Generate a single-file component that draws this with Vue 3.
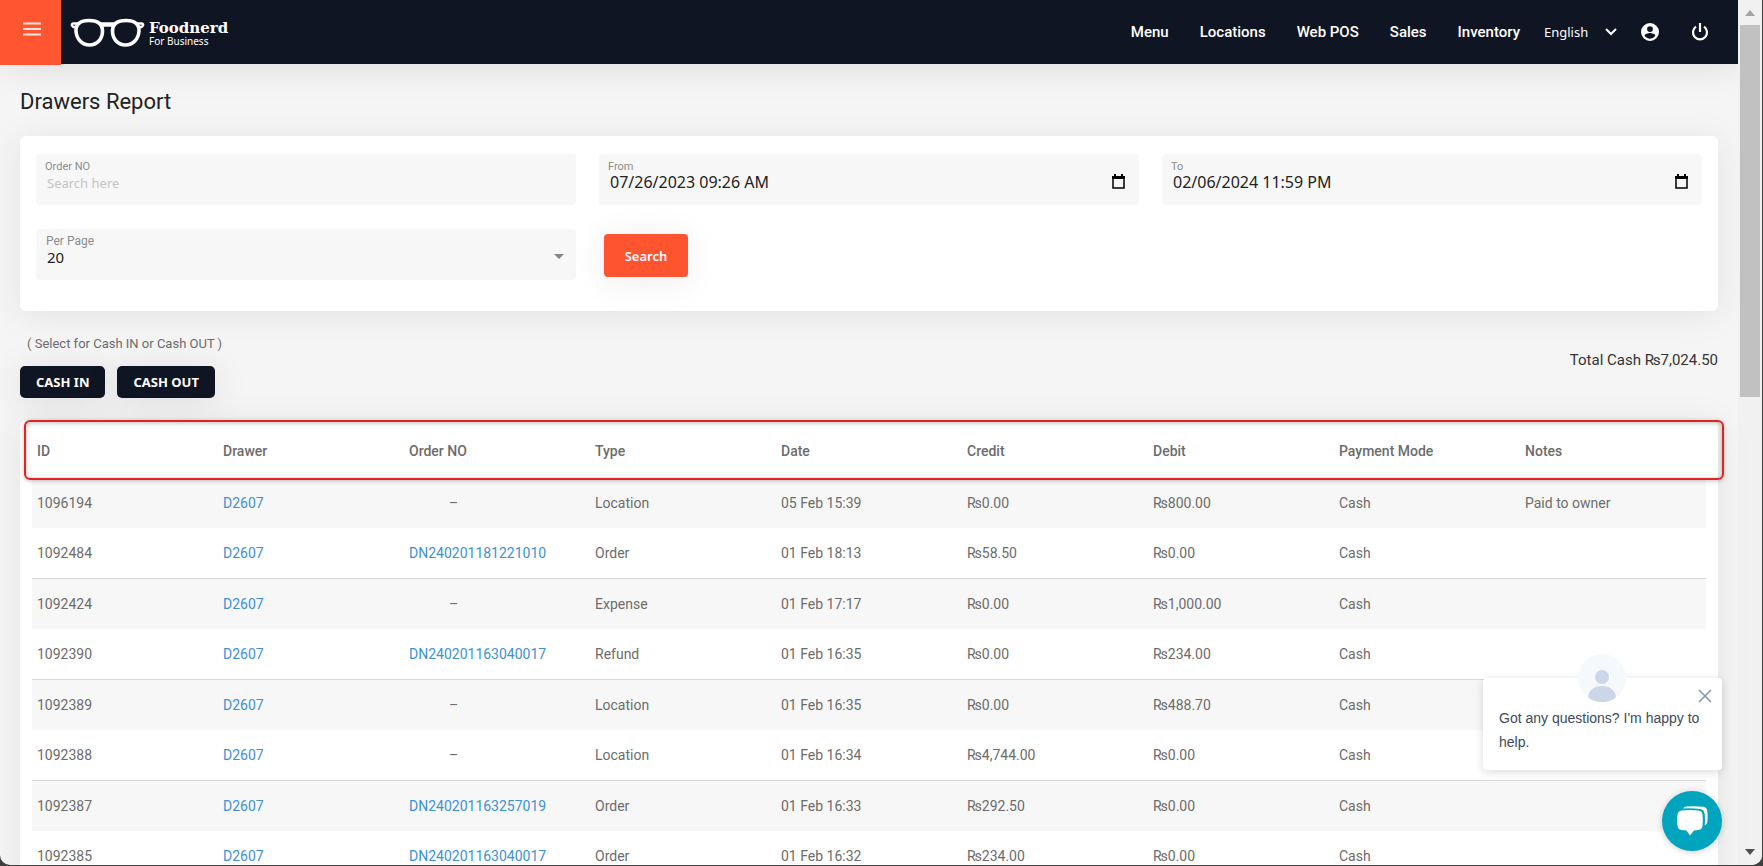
<script setup>
import { ref } from 'vue'

const links = ['Menu', 'Locations', 'Web POS', 'Sales', 'Inventory']
const columns = ['ID', 'Drawer', 'Order NO', 'Type', 'Date', 'Credit', 'Debit', 'Payment Mode', 'Notes']
const rows = [
  { id: '1096194', order: '', type: 'Location', date: '05 Feb 15:39', credit: '₨0.00', debit: '₨800.00', notes: 'Paid to owner' },
  { id: '1092484', order: 'DN240201181221010', type: 'Order', date: '01 Feb 18:13', credit: '₨58.50', debit: '₨0.00', notes: '' },
  { id: '1092424', order: '', type: 'Expense', date: '01 Feb 17:17', credit: '₨0.00', debit: '₨1,000.00', notes: '' },
  { id: '1092390', order: 'DN240201163040017', type: 'Refund', date: '01 Feb 16:35', credit: '₨0.00', debit: '₨234.00', notes: '' },
  { id: '1092389', order: '', type: 'Location', date: '01 Feb 16:35', credit: '₨0.00', debit: '₨488.70', notes: '' },
  { id: '1092388', order: '', type: 'Location', date: '01 Feb 16:34', credit: '₨4,744.00', debit: '₨0.00', notes: '' },
  { id: '1092387', order: 'DN240201163257019', type: 'Order', date: '01 Feb 16:33', credit: '₨292.50', debit: '₨0.00', notes: '' },
  { id: '1092385', order: 'DN240201163040017', type: 'Order', date: '01 Feb 16:32', credit: '₨234.00', debit: '₨0.00', notes: '' },
]
const orderNo = ref('')
const from = ref('07/26/2023 09:26 AM')
const to = ref('02/06/2024 11:59 PM')
const perPage = ref('20')
const language = ref('English')
const chatOpen = ref(true)
</script>

<template>
  <div class="window">
    <div class="page">
      <header class="topbar">
        <button class="menu-toggle" type="button" aria-label="Toggle menu">
          <svg width="18" height="14" viewBox="0 0 18 14"><path d="M0 1.500h18M0 7h18M0 12.500h18" stroke="#fde4dc" stroke-width="2.200" /></svg>
        </button>
        <a class="brand" href="#">
          <svg class="glasses" width="76" height="30" viewBox="0 0 76 30" fill="none" stroke="#fff">
            <path d="M19 2.500c9 0 13.500 4 13.500 10.500 0 8-5.500 14-13 14S6.500 21 6 13C5.600 6.500 10 2.500 19 2.500z" stroke-width="3.600" />
            <path d="M56 2.500c-9 0-13.500 4-13.500 10.500 0 8 5.500 14 13 14s13-6 13.500-14c.4-6.500-4-10.500-13-10.500z" stroke-width="3.600" />
            <path d="M31 6.500h13" stroke-width="4.500" />
            <path d="M8 5.500H3.500C2 5.500 1.500 6.500 2 7.500l1.500 1.500H6M67 5.500h4.500c1.500 0 2 1 1.500 2L71.500 9H69" stroke-width="2.400" />
          </svg>
          <span class="brand-text">
            <span class="brand-name">Foodnerd</span>
            <span class="brand-sub">For Business</span>
          </span>
        </a>
        <nav class="nav">
          <a v-for="l in links" :key="l" href="#">{{ l }}</a>
        </nav>
        <div class="language">
          <select v-model="language" aria-label="Language"><option>English</option></select>
          <svg width="12" height="8" viewBox="0 0 12 8" fill="none" stroke="#fff" stroke-width="2"><path d="M1 1l5 5 5-5" /></svg>
        </div>
        <button class="icon-btn" type="button" aria-label="Account">
          <svg width="18" height="18" viewBox="2 2 20 20" fill="#fff"><path d="M12 2a10 10 0 1 0 0 20 10 10 0 0 0 0-20zm0 3.500a3.200 3.200 0 1 1 0 6.400 3.200 3.200 0 0 1 0-6.400zm0 14c-2.500 0-4.700-1.300-6-3.200 0-2 4-3.100 6-3.100s6 1.100 6 3.100a7.200 7.200 0 0 1-6 3.200z" /></svg>
        </button>
        <button class="icon-btn" type="button" aria-label="Log out">
          <svg width="18" height="18" viewBox="0 0 18 18" fill="none" stroke="#fff" stroke-width="2.200"><path d="M9 0v9M5 3.600A7 7 0 1 0 13 3.600" /></svg>
        </button>
      </header>

      <main class="content">
        <h1>Drawers Report</h1>

        <form class="filters" @submit.prevent>
          <div class="field">
            <label for="order">Order NO</label>
            <input id="order" v-model="orderNo" type="text" class="small" placeholder="Search here" />
          </div>
          <div class="field">
            <label for="from">From</label>
            <input id="from" v-model="from" type="text" />
            <button class="calendar" type="button" aria-label="Pick start date">
              <svg width="13" height="15" viewBox="0 0 13 15"><path d="M1 3h11v11H1z" fill="none" stroke="#000" stroke-width="1.500" /><path d="M0 2h13v3H0zM2 0h2v3H2zM9 0h2v3H9z" /></svg>
            </button>
          </div>
          <div class="field">
            <label for="to">To</label>
            <input id="to" v-model="to" type="text" />
            <button class="calendar" type="button" aria-label="Pick end date">
              <svg width="13" height="15" viewBox="0 0 13 15"><path d="M1 3h11v11H1z" fill="none" stroke="#000" stroke-width="1.500" /><path d="M0 2h13v3H0zM2 0h2v3H2zM9 0h2v3H9z" /></svg>
            </button>
          </div>
          <div class="field select-field">
            <label for="per">Per Page</label>
            <select id="per" v-model="perPage"><option>20</option></select>
            <svg class="caret" width="10" height="5" viewBox="0 0 10 5"><path d="M0 0h10L5 5z" fill="#858585" /></svg>
          </div>
          <div class="actions">
            <button class="search" type="submit">Search</button>
          </div>
        </form>

        <section class="cash">
          <div>
            <p class="hint">( Select for Cash IN or Cash OUT )</p>
            <div class="cash-buttons">
              <button type="button">CASH IN</button>
              <button type="button">CASH OUT</button>
            </div>
          </div>
          <p class="total">Total Cash ₨7,024.50</p>
        </section>

        <section class="report">
          <div class="highlight"></div>
          <table>
            <thead>
              <tr><th v-for="c in columns" :key="c" scope="col">{{ c }}</th></tr>
            </thead>
            <tbody>
              <tr v-for="r in rows" :key="r.id">
                <td>{{ r.id }}</td>
                <td><a href="#">D2607</a></td>
                <td v-if="r.order"><a href="#">{{ r.order }}</a></td>
                <td v-else class="none">–</td>
                <td>{{ r.type }}</td>
                <td>{{ r.date }}</td>
                <td>{{ r.credit }}</td>
                <td>{{ r.debit }}</td>
                <td>Cash</td>
                <td>{{ r.notes }}</td>
              </tr>
            </tbody>
          </table>
        </section>
      </main>
    </div>

    <div class="scrollbar" aria-hidden="true">
      <svg width="10" height="6" viewBox="0 0 10 6"><path d="M0 6h10L5 0z" fill="#a3a3a3" /></svg>
      <div class="thumb"></div>
      <svg class="down" width="10" height="6" viewBox="0 0 10 6"><path d="M0 0h10L5 6z" fill="#505050" /></svg>
    </div>

    <aside v-if="chatOpen" class="chat-popup">
      <span class="avatar">
        <svg width="28" height="32" viewBox="0 0 28 32" fill="#cbd6e8"><circle cx="14" cy="7" r="7" /><path d="M0 27c1-7 6-11 14-11s13 4 14 11c-3 3.500-8 5-14 5S3 30.500 0 27z" /></svg>
      </span>
      <button class="close" type="button" aria-label="Close" @click="chatOpen = false">
        <svg width="14" height="14" viewBox="0 0 14 14" stroke="#7c98b6" stroke-width="1.500"><path d="M1 1l12 12M13 1L1 13" /></svg>
      </button>
      <p>Got any questions? I'm happy to help.</p>
    </aside>
    <button class="chat-button" type="button" aria-label="Open chat">
      <svg width="32" height="30" viewBox="0 0 32 30" fill="#fff">
        <path d="M5.500 4.500Q14 3.500 22.500 4.500 26 5 26.500 8.500q.8 6 0 11.500-.5 3.500-4 4l-4.500.5-4 5-3.500-5-5-.5q-3.500-.5-4-4-1-5.500 0-11.500.5-3.500 4-4z" />
        <path d="M7 2.500Q8 .8 10 .6q9-1 17.500.2 3.300.5 3.700 3.700.8 6 .1 11.500-.4 2.500-2.600 3.500.6-6-.1-12-.6-4-4.500-4.500Q15.500 2 7 2.500z" />
      </svg>
    </button>
  </div>
</template>

<style>
body {
  background: #3f3f3f;
}
</style>

<style scoped>
* {
  box-sizing: border-box;
}
.window {
  position: relative;
  display: flex;
  height: calc(100vh - 1px);
  margin-right: 1px;
  overflow: hidden;
  border-radius: 0 0 10px 10px;
  background: #f5f5f5;
  color: #6c6c6c;
  font-family: Roboto, sans-serif;
  font-size: 14px;
}
button,
input,
select {
  margin: 0;
  padding: 0;
  border: 0;
  background: none;
  font-family: "Noto Sans", sans-serif;
}
svg {
  display: block;
}
a {
  color: #3d92d3;
  text-decoration: none;
}
.page {
  flex: 1;
  min-width: 0;
}
.topbar {
  display: flex;
  align-items: center;
  height: 64px;
  padding-right: 29px;
  background: #101524;
  box-shadow: 0 4px 36px rgba(0, 0, 0, 0.1);
}
.menu-toggle {
  display: flex;
  align-items: center;
  justify-content: center;
  align-self: flex-start;
  flex: none;
  width: 61px;
  height: 65px;
  padding: 0 0 8px 3px;
  background: #ff5531;
}
.brand {
  display: flex;
  align-items: center;
  gap: 3px;
  padding: 2px 0 0 9px;
  color: #fff;
}
.brand-text {
  display: flex;
  flex-direction: column;
}
.brand-name {
  font: bold 15px/16px "DejaVu Serif", serif;
}
.brand-sub {
  font: 10px/10px "Noto Sans", sans-serif;
}
.nav {
  display: flex;
  gap: 31px;
  margin-left: auto;
}
.nav a {
  color: #fff;
  font-size: 15px;
  font-weight: 500;
}
.language {
  display: flex;
  align-items: center;
  gap: 16px;
  margin: 0 24px;
}
.language select {
  appearance: none;
  color: #fff;
  font-size: 13px;
}
.icon-btn + .icon-btn {
  margin-left: 32px;
}
.content {
  padding: 0 20px;
}
h1 {
  margin: 0;
  padding: 24px 0 20px;
  color: #222;
  font-size: 22px;
  font-weight: 400;
  line-height: 28px;
}
.filters {
  display: grid;
  grid-template-columns: repeat(3, 1fr);
  gap: 24px 23px;
  padding: 18px 16px 31px;
  border-radius: 6px;
  background: #fff;
  box-shadow: 0 4px 36px rgba(0, 0, 0, 0.08);
}
.field {
  position: relative;
  display: flex;
  flex-direction: column;
  height: 51px;
  padding: 5px 10px 0 9px;
  border-radius: 4px;
  background: #f7f7f7;
}
.field label {
  color: #8c8c8c;
  font-size: 11px;
  line-height: 15px;
}
.field input,
.field select {
  height: 16px;
  padding-left: 2px;
  appearance: none;
  color: #222;
  font-size: 16px;
  line-height: 16px;
}
.field input.small {
  height: 18px;
  font-size: 13px;
}
.field input::placeholder {
  color: #c4c4c4;
}
.field.select-field label {
  padding-left: 1px;
  font-size: 12px;
}
.field.select-field select {
  font-size: 15px;
}
.caret {
  position: absolute;
  right: 12px;
  top: 25px;
}
.calendar {
  position: absolute;
  right: 14px;
  top: 20px;
}
.actions {
  padding: 5px;
  height: 51px;
}
.search {
  width: 84px;
  height: 43px;
  border-radius: 4px;
  background: #ff5430;
  box-shadow: 0 4px 36px rgba(0, 0, 0, 0.08);
  color: #fff;
  font-size: 13px;
  font-weight: 600;
}
.cash {
  display: flex;
  align-items: center;
  justify-content: space-between;
  padding: 24px 0 22px;
}
.hint {
  margin: 0 0 13px;
  padding-left: 7px;
  font-size: 13px;
  line-height: 18px;
}
.cash-buttons {
  display: flex;
  gap: 12px;
}
.cash-buttons button {
  height: 32px;
  padding: 0 16px;
  border-radius: 5px;
  background: #101524;
  box-shadow: 0 4px 36px rgba(0, 0, 0, 0.1);
  color: #fff;
  font-size: 13px;
  font-weight: 700;
}
.total {
  margin: 0;
  padding-bottom: 14px;
  color: #333;
  font-size: 15px;
}
.report {
  position: relative;
  padding: 0 12px;
  border-radius: 6px;
  background: #fff;
  box-shadow: 0 4px 36px rgba(0, 0, 0, 0.08);
}
.highlight {
  position: absolute;
  left: 4px;
  right: -6px;
  top: 0;
  height: 60px;
  border: 2px solid #e02424;
  border-radius: 6px;
  box-shadow: 0 1px 4px rgba(0, 0, 0, 0.25), inset 0 1px 5px rgba(0, 0, 0, 0.25);
}
table {
  width: 100%;
  border-spacing: 0;
  table-layout: fixed;
}
th,
td {
  height: 50px;
  padding: 0 0 0 5px;
  text-align: left;
  white-space: nowrap;
}
th {
  height: 58px;
  padding-top: 3px;
  font-weight: 500;
}
tbody tr:nth-child(odd) td {
  background: #f7f7f7;
}
tbody tr:nth-child(even) td {
  height: 51px;
  border-bottom: 1px solid #d9d9d9;
}
tbody td.none {
  padding-left: 45px;
}
.scrollbar {
  display: flex;
  flex-direction: column;
  align-items: center;
  flex: none;
  width: 24px;
  padding: 10px 2px;
  background: #f1f1f1;
}
.thumb {
  width: 20px;
  height: 372px;
  margin-top: 9px;
  background: #c1c1c1;
}
.down {
  margin-top: auto;
}
.chat-popup {
  position: absolute;
  right: 40px;
  bottom: 95px;
  width: 239px;
  padding: 28px 16px 16px;
  border-radius: 4px;
  background: #fff;
  box-shadow: 0 2px 10px rgba(0, 0, 0, 0.15);
  color: #3c4a5c;
  font: 14px/24px "Liberation Sans", sans-serif;
}
.chat-popup p {
  margin: 0;
}
.avatar {
  position: absolute;
  left: 95px;
  top: -24px;
  display: flex;
  align-items: flex-end;
  justify-content: center;
  width: 48px;
  height: 48px;
  border-radius: 50%;
  background: #f5f9fc;
}
.close {
  position: absolute;
  right: 10px;
  top: 11px;
}
.chat-button {
  position: absolute;
  right: 40px;
  bottom: 14px;
  display: flex;
  align-items: center;
  justify-content: center;
  width: 60px;
  height: 60px;
  border-radius: 50%;
  background: #00a4bd;
  box-shadow: 0 1px 6px rgba(0, 0, 0, 0.2);
}
</style>
